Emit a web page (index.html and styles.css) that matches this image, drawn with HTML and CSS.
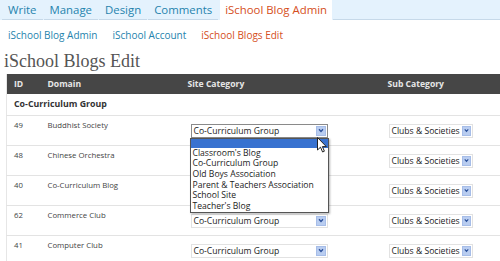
FILE: index.html
```html
<!DOCTYPE html>
<html>
<head>
<meta charset="utf-8">
<link rel="stylesheet" href="styles.css">
</head>
<body>
<div class="page">
  <nav class="tabs">
    <a class="tab">Write</a>
    <a class="tab">Manage</a>
    <a class="tab">Design</a>
    <a class="tab">Comments</a>
    <a class="tab active">iSchool Blog Admin</a>
    <span class="tab-fill"></span>
  </nav>
  <nav class="submenu">
    <a class="sub">iSchool Blog Admin</a>
    <a class="sub">iSchool Account</a>
    <a class="sub current">iSchool Blogs Edit</a>
  </nav>
  <h2 class="title">iSchool Blogs Edit</h2>
  <div class="table-wrap">
    <table class="blogs">
      <colgroup>
        <col class="c-id"><col class="c-domain"><col class="c-site"><col class="c-sub">
      </colgroup>
      <thead>
        <tr><th>ID</th><th>Domain</th><th>Site Category</th><th>Sub Category</th></tr>
      </thead>
      <tbody>
        <tr class="group"><td colspan="4">Co-Curriculum Group</td></tr>
        <tr>
          <td>49</td><td>Buddhist Society</td>
          <td class="sel-cell">
            <div class="select site focused"><span class="val">Co-Curriculum Group</span><span class="arrow"><svg viewBox="0 0 10 10" width="9" height="9"><path d="M2.5 3.5 L5 6.2 L7.5 3.5" fill="none" stroke="#2a4f9a" stroke-width="1.6"/></svg></span></div>
            <ul class="dropdown">
              <li class="hl">&nbsp;</li>
              <li>Classroom's Blog</li>
              <li>Co-Curriculum Group</li>
              <li>Old Boys Association</li>
              <li>Parent &amp; Teachers Association</li>
              <li>School Site</li>
              <li>Teacher's Blog</li>
            </ul>
            <svg class="cursor" viewBox="0 0 11 17" width="11" height="17"><path d="M0.5 0.5 L0.5 13 L3.5 10.2 L5.6 15 L7.4 14.2 L5.4 9.6 L9.3 9.6 Z" fill="#fff" stroke="#222" stroke-width="1"/></svg>
          </td>
          <td class="sel-cell"><div class="select subc"><span class="val">Clubs &amp; Societies</span><span class="arrow"><svg viewBox="0 0 10 10" width="9" height="9"><path d="M2.5 3.5 L5 6.2 L7.5 3.5" fill="none" stroke="#2a4f9a" stroke-width="1.6"/></svg></span></div></td>
        </tr>
        <tr>
          <td>48</td><td>Chinese Orchestra</td>
          <td class="sel-cell"><div class="select site"><span class="val">Co-Curriculum Group</span><span class="arrow"><svg viewBox="0 0 10 10" width="9" height="9"><path d="M2.5 3.5 L5 6.2 L7.5 3.5" fill="none" stroke="#2a4f9a" stroke-width="1.6"/></svg></span></div></td>
          <td class="sel-cell"><div class="select subc"><span class="val">Clubs &amp; Societies</span><span class="arrow"><svg viewBox="0 0 10 10" width="9" height="9"><path d="M2.5 3.5 L5 6.2 L7.5 3.5" fill="none" stroke="#2a4f9a" stroke-width="1.6"/></svg></span></div></td>
        </tr>
        <tr>
          <td>40</td><td>Co-Curriculum Blog</td>
          <td class="sel-cell"><div class="select site"><span class="val">Co-Curriculum Group</span><span class="arrow"><svg viewBox="0 0 10 10" width="9" height="9"><path d="M2.5 3.5 L5 6.2 L7.5 3.5" fill="none" stroke="#2a4f9a" stroke-width="1.6"/></svg></span></div></td>
          <td class="sel-cell"><div class="select subc"><span class="val">Clubs &amp; Societies</span><span class="arrow"><svg viewBox="0 0 10 10" width="9" height="9"><path d="M2.5 3.5 L5 6.2 L7.5 3.5" fill="none" stroke="#2a4f9a" stroke-width="1.6"/></svg></span></div></td>
        </tr>
        <tr>
          <td>62</td><td>Commerce Club</td>
          <td class="sel-cell"><div class="select site"><span class="val">Co-Curriculum Group</span><span class="arrow"><svg viewBox="0 0 10 10" width="9" height="9"><path d="M2.5 3.5 L5 6.2 L7.5 3.5" fill="none" stroke="#2a4f9a" stroke-width="1.6"/></svg></span></div></td>
          <td class="sel-cell"><div class="select subc"><span class="val">Clubs &amp; Societies</span><span class="arrow"><svg viewBox="0 0 10 10" width="9" height="9"><path d="M2.5 3.5 L5 6.2 L7.5 3.5" fill="none" stroke="#2a4f9a" stroke-width="1.6"/></svg></span></div></td>
        </tr>
        <tr>
          <td>41</td><td>Computer Club</td>
          <td class="sel-cell"><div class="select site"><span class="val">Co-Curriculum Group</span><span class="arrow"><svg viewBox="0 0 10 10" width="9" height="9"><path d="M2.5 3.5 L5 6.2 L7.5 3.5" fill="none" stroke="#2a4f9a" stroke-width="1.6"/></svg></span></div></td>
          <td class="sel-cell"><div class="select subc"><span class="val">Clubs &amp; Societies</span><span class="arrow"><svg viewBox="0 0 10 10" width="9" height="9"><path d="M2.5 3.5 L5 6.2 L7.5 3.5" fill="none" stroke="#2a4f9a" stroke-width="1.6"/></svg></span></div></td>
        </tr>
      </tbody>
    </table>
  </div>
</div>
</body>
</html>
```
FILE: styles.css
```css
html, body {
  margin: 0;
  padding: 0;
  background: #fff;
  overflow: hidden;
  width: 500px;
  height: 261px;
}
.page {
  font-family: "Open Sans", "DejaVu Sans", sans-serif;
  color: #333;
}
.tabs {
  display: flex;
  align-items: stretch;
  height: 20px;
  background: #e4f2fd;
  padding-left: 2px;
}
.tab {
  display: block;
  font-size: 11.4px;
  line-height: 19px;
  color: #2583ad;
  padding: 0 6px;
  margin-right: 1px;
  border-bottom: 1px solid #c6d9e9;
}
.tab.active {
  background: #fff;
  color: #d54e21;
  border-bottom-color: #fff;
  padding: 0 5px;
  margin-left: 1px;
}
.tab-fill {
  flex: 1;
  border-bottom: 1px solid #c6d9e9;
}
.submenu {
  display: flex;
  gap: 15px;
  padding: 0 0 0 8px;
  height: 27px;
  align-items: center;
  margin-top: 1px;
}
.sub {
  font-size: 10px;
  color: #2583ad;
}
.sub.current {
  color: #d54e21;
}
.title {
  margin: 0;
  padding-left: 4px;
  font-family: "Liberation Serif", "DejaVu Serif", serif;
  font-weight: normal;
  font-size: 18px;
  line-height: 26px;
  color: #555;
  height: 26px;
}
.table-wrap {
  padding-left: 6px;
}
.blogs {
  border-collapse: collapse;
  table-layout: fixed;
  width: 494px;
  border-left: 1px solid #e6e6e6;
}
.c-id { width: 34px; }
.c-domain { width: 140px; }
.c-site { width: 200px; }
.c-sub { width: 120px; }
.blogs th {
  background: #464646;
  color: #e6e6e6;
  font-size: 8.6px;
  font-weight: bold;
  text-align: left;
  height: 20px;
  padding: 0 0 0 7px;
}
.blogs td {
  font-size: 7.8px;
  color: #444;
  vertical-align: top;
  padding: 4px 0 0 7px;
  height: 30px;
  box-sizing: border-box;
  border-bottom: 1px solid #e3e3e3;
  background: #fff;
}
.blogs tr.group td {
  font-weight: bold;
  font-size: 8.8px;
  color: #333;
  height: 21px;
  padding-top: 0;
  vertical-align: middle;
}
.blogs td.sel-cell {
  padding-top: 8px;
  position: relative;
}
.select {
  display: flex;
  align-items: center;
  justify-content: space-between;
  height: 14px;
  box-sizing: border-box;
  border: 1px solid #e2e2e2;
  background: #fff;
  font-size: 8.6px;
  color: #222;
  padding: 0 1px 0 2px;
}
.select.site {
  width: 137px;
  margin-left: 3px;
}
.select.subc {
  width: 84px;
  margin-left: 1px;
}
.select.focused {
  border-color: #8a8a8a;
}
.select .val {
  white-space: nowrap;
}
.arrow {
  display: flex;
  align-items: center;
  justify-content: center;
  width: 10px;
  height: 10px;
  background: #b9cdf0;
  border: 1px solid #a6bde8;
  box-sizing: border-box;
}
.subc .arrow {
  width: 9px;
  height: 10px;
}
.dropdown {
  position: absolute;
  left: 9px;
  top: 22px;
  width: 139px;
  margin: 0;
  padding: 0;
  list-style: none;
  background: #fff;
  border: 1px solid #555;
  box-sizing: border-box;
  box-shadow: 1px 1px 2px rgba(0,0,0,0.3);
  z-index: 5;
}
.dropdown li {
  font-size: 8.6px;
  line-height: 10.7px;
  height: 10.7px;
  padding-left: 2px;
  color: #222;
  white-space: nowrap;
}
.dropdown li.hl {
  background: #3872d0;
  height: 9px;
}
.cursor {
  position: absolute;
  left: 136px;
  top: 21px;
  z-index: 6;
}
```
